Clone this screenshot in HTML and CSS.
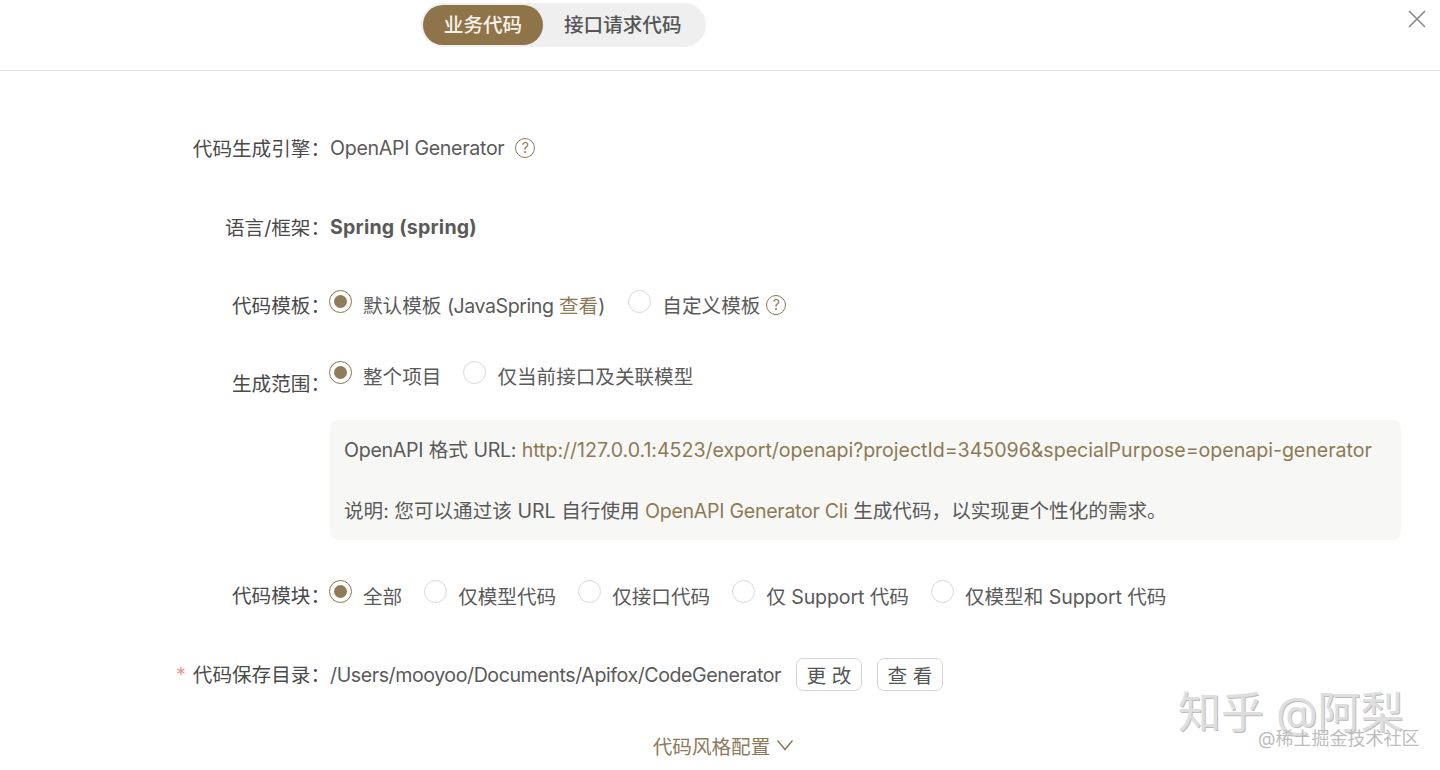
FILE: index.html
```html
<!DOCTYPE html>
<html lang="zh-CN">
<head>
  <meta charset="UTF-8">
  <title>生成代码</title>
  <link rel="stylesheet" href="styles.css">
</head>
<body>
  <header class="top">
    <div class="tabs">
      <div class="tab active">业务代码</div>
      <div class="tab">接口请求代码</div>
    </div>
    <svg class="close" width="18" height="18" viewBox="0 0 18 18"><path d="M1 1L17 17M17 1L1 17" stroke="#8a8a8a" stroke-width="1.7" fill="none"/></svg>
  </header>

  <main class="form">
    <div class="row row-engine">
      <div class="label">代码生成引擎：</div>
      <div class="value">
        <span class="lat">OpenAPI Generator</span>
        <span class="help help-engine">?</span>
      </div>
    </div>

    <div class="row row-lang">
      <div class="label">语言/框架：</div>
      <div class="value"><strong class="strong">Spring (spring)</strong></div>
    </div>

    <div class="row row-tpl">
      <div class="label">代码模板：</div>
      <div class="value">
        <span class="radio on"></span><span class="opt">默认模板 <span class="lat-tight">(JavaSpring</span> <a>查看</a>)</span>
        <span class="radio"></span><span class="opt opt-last">自定义模板</span>
        <span class="help">?</span>
      </div>
    </div>

    <div class="row row-scope">
      <div class="label label-low">生成范围：</div>
      <div class="value">
        <span class="radio on"></span><span class="opt">整个项目</span>
        <span class="radio"></span><span class="opt">仅当前接口及关联模型</span>
      </div>
    </div>

    <div class="info">
      <p><span class="lat">OpenAPI</span> 格式 <span class="lat">URL:</span> <a class="url">http://127.0.0.1:4523/export/openapi?projectId=345096&amp;specialPurpose=openapi-generator</a></p>
      <p>说明: 您可以通过该 URL 自行使用 <a class="lat">OpenAPI Generator Cli</a> 生成代码，以实现更个性化的需求。</p>
    </div>

    <div class="row row-module">
      <div class="label">代码模块：</div>
      <div class="value">
        <span class="radio on"></span><span class="opt">全部</span>
        <span class="radio"></span><span class="opt">仅模型代码</span>
        <span class="radio"></span><span class="opt">仅接口代码</span>
        <span class="radio"></span><span class="opt">仅 <span class="lat-soft">Support</span> 代码</span>
        <span class="radio"></span><span class="opt">仅模型和 <span class="lat-soft">Support</span> 代码</span>
      </div>
    </div>

    <div class="row row-dir">
      <div class="label"><span class="req">*</span>代码保存目录：</div>
      <div class="value">
        <span class="path">/Users/mooyoo/Documents/Apifox/CodeGenerator</span>
        <button class="btn">更 改</button>
        <button class="btn">查 看</button>
      </div>
    </div>

    <div class="more">
      <span>代码风格配置</span>
      <svg width="18" height="12" viewBox="0 0 18 12"><path d="M1.5 1.5L9 10.5L16.5 1.5" stroke="#8d7a5c" stroke-width="1.5" fill="none"/></svg>
    </div>
  </main>

  <div class="mark">知乎 @阿梨</div>
  <div class="mark-sub">@稀土掘金技术社区</div>
</body>
</html>
```

FILE: styles.css
```css
* {
  box-sizing: border-box;
}
html, body {
  height: 770px;
  overflow: hidden;
}
body {
  margin: 0;
  background: #fff;
  color: #5a5a5a;
  font-family: Inter, "Noto Sans CJK SC", sans-serif;
  font-size: 19.6px;
  position: relative;
}
a {
  color: #8d7a55;
}
.lat {
  letter-spacing: -0.3px;
}
.lat-tight {
  letter-spacing: -0.45px;
}
.lat-soft {
  letter-spacing: -0.15px;
}
.url {
  letter-spacing: -0.03px;
}
.strong {
  letter-spacing: 0.2px;
}

.top {
  height: 71px;
  border-bottom: 1px solid #e2e2e2;
  padding: 3px 0 0 421px;
  position: relative;
}
.tabs {
  display: flex;
  width: 285px;
  height: 44px;
  background: #efefef;
  border-radius: 22px;
  padding: 2px 0 2px 2px;
}
.tab {
  height: 40px;
  line-height: 40px;
  padding: 0 21px;
  border-radius: 20px;
  color: #555;
  font-weight: 500;
}
.tab.active {
  width: 120px;
  background: #8f7349;
  color: #f8f3ea;
  padding: 0;
  text-align: center;
}
.close {
  position: absolute;
  top: 10px;
  right: 14px;
}

.form {
  display: flex;
  flex-direction: column;
}
.row {
  display: flex;
  align-items: center;
  height: 40px;
}
.label {
  width: 330px;
  flex: none;
  text-align: right;
  color: #4a4a4a;
  white-space: nowrap;
  padding-bottom: 2px;
}
.label-low {
  position: relative;
  top: 7px;
}
.req {
  color: #e8959e;
  margin-right: 7px;
}
.value {
  display: flex;
  align-items: center;
  white-space: nowrap;
}
.row-engine { margin-top: 57px; }
.row-lang { margin-top: 39px; }
.row-tpl { margin-top: 38px; }
.row-scope { margin-top: 31px; }
.row-module { margin-top: 35px; }
.row-dir { margin-top: 39px; }

.radio {
  width: 23px;
  height: 23px;
  border: 1px solid #d9d9d9;
  border-radius: 50%;
  flex: none;
  position: relative;
  top: -4px;
  left: -1px;
  margin-right: 11px;
  background: #fff;
}
.radio.on {
  border: 1.5px solid #8f7349;
}
.radio.on::after {
  content: "";
  position: absolute;
  inset: 4px;
  border-radius: 50%;
  background: #8f7c5a;
}
.opt {
  margin-left: -1px;
  margin-right: 23px;
  padding-bottom: 2px;
}
.row-tpl .opt {
  margin-right: 24px;
}
.row-tpl .opt-last {
  margin-right: 6px;
}
.row-module .opt {
  padding-bottom: 0;
}
.help {
  width: 20px;
  height: 20px;
  border: 1.5px solid #87795f;
  border-radius: 50%;
  color: #87795f;
  font-size: 14px;
  line-height: 17px;
  text-align: center;
  flex: none;
}
.help-engine {
  margin-left: 11px;
}

.info {
  margin: 24px 39px 0 330px;
  height: 120px;
  background: #f7f7f5;
  border-radius: 8px;
  padding: 0 14px;
  display: flex;
  flex-direction: column;
  justify-content: space-between;
  white-space: nowrap;
}
.info p {
  margin: 0;
  line-height: 28px;
  padding: 16px 0;
}
.info p:last-child {
  padding: 17px 0 15px;
}

.path {
  margin-right: 15px;
  padding-top: 2px;
  letter-spacing: -0.43px;
}
.btn {
  height: 33px;
  width: 66px;
  margin-right: 15px;
  background: #fff;
  border: 1px solid #d5d5d5;
  border-radius: 7px;
  color: #555;
  font: inherit;
  padding: 0;
}

.more {
  display: flex;
  align-items: center;
  justify-content: center;
  gap: 6px;
  margin-top: 35px;
  color: #8d7a5c;
  width: 1447px;
  height: 32px;
}

.mark {
  position: absolute;
  left: 1178px;
  top: 686px;
  font-size: 43px;
  line-height: 52px;
  color: #dedede;
  text-shadow: 1px 1px 0 #bdbdbd;
  white-space: nowrap;
}
.mark-sub {
  position: absolute;
  left: 1258px;
  top: 727px;
  font-size: 18px;
  line-height: 24px;
  color: #bdbdbd;
  white-space: nowrap;
}
```
